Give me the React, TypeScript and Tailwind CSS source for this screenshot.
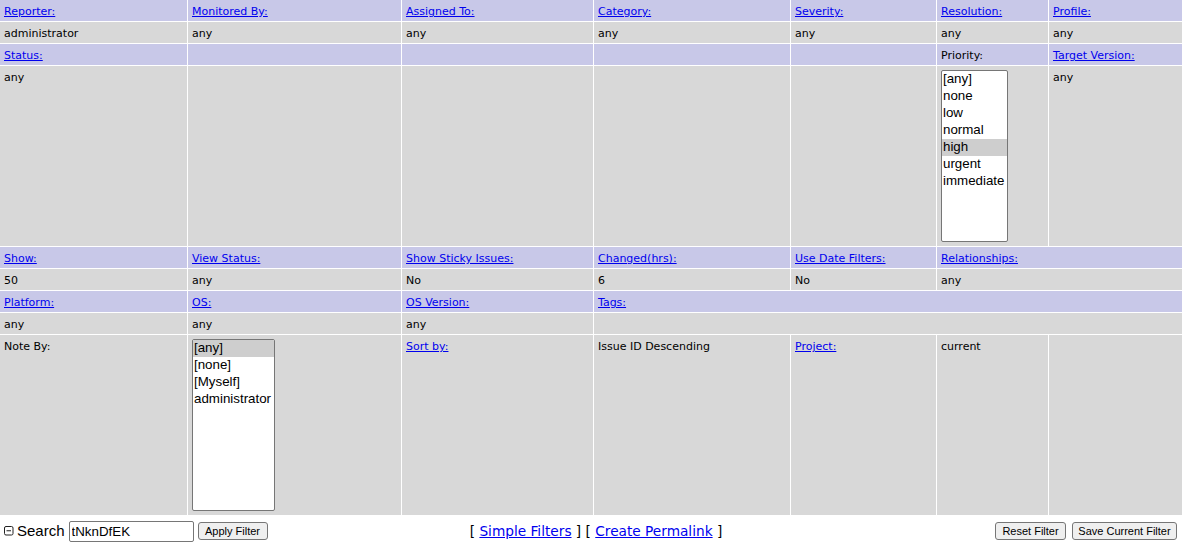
import React from 'react';

const head = "bg-[#c8c8e8] px-1 pt-[5px] leading-[13px] whitespace-nowrap overflow-hidden";
const data = "bg-[#d8d8d8] px-1 pt-[5px] leading-[13px] whitespace-nowrap overflow-hidden";
const boxCell = "bg-[#d8d8d8] px-1 pt-[4px]";

const HeadLink = ({ label }: { label: string }) => (
  <a href="#" className="text-[#0000ee] underline">
    {label}
  </a>
);

interface ListBoxProps {
  items: string[];
  selected: string;
  width: string;
}

const ListBox: React.FC<ListBoxProps> = ({ items, selected, width }) => (
  <div
    className={`${width} h-[172px] bg-white border border-[#767676] rounded-[2px] overflow-hidden font-['Liberation_Sans',Arial,sans-serif] text-[13.33px] leading-[16px] text-black`}
  >
    {items.map((it) => (
      <div key={it} className={it === selected ? "h-[17px] pl-[1px] bg-[#cecece]" : "h-[17px] pl-[1px]"}>
        {it}
      </div>
    ))}
  </div>
);

const MinusBox = () => (
  <svg width="10" height="10" viewBox="0 0 10 10" className="shrink-0">
    <rect x="0.5" y="0.5" width="8.5" height="8.5" rx="1.5" fill="none" stroke="#222" strokeWidth="1" />
    <line x1="2.5" y1="4.75" x2="7" y2="4.75" stroke="#222" strokeWidth="1" />
  </svg>
);

const btn =
  "h-[18px] bg-[#efefef] border border-[#767676] rounded-[3px] text-[11px] leading-[16px] text-black font-['Liberation_Sans',Arial,sans-serif]";

export default function App() {
  return (
    <div className="w-[1182px] h-[545px] bg-white text-black overflow-hidden">
      <div className="grid grid-cols-[187px_213px_191px_196px_145px_111px_133px] grid-rows-[21px_21px_21px_180px_21px_21px_21px_21px_180px] gap-px bg-white font-['DejaVu_Sans',Verdana,sans-serif] text-[11px]">
        {/* row 1 */}
        <div className={head}><HeadLink label="Reporter:" /></div>
        <div className={head}><HeadLink label="Monitored By:" /></div>
        <div className={head}><HeadLink label="Assigned To:" /></div>
        <div className={head}><HeadLink label="Category:" /></div>
        <div className={head}><HeadLink label="Severity:" /></div>
        <div className={head}><HeadLink label="Resolution:" /></div>
        <div className={head}><HeadLink label="Profile:" /></div>
        {/* row 2 */}
        <div className={data}>administrator</div>
        <div className={data}>any</div>
        <div className={data}>any</div>
        <div className={data}>any</div>
        <div className={data}>any</div>
        <div className={data}>any</div>
        <div className={data}>any</div>
        {/* row 3 */}
        <div className={head}><HeadLink label="Status:" /></div>
        <div className={head}></div>
        <div className={head}></div>
        <div className={head}></div>
        <div className={head}></div>
        <div className={head}>Priority:</div>
        <div className={head}><HeadLink label="Target Version:" /></div>
        {/* row 4 */}
        <div className={data}>any</div>
        <div className={data}></div>
        <div className={data}></div>
        <div className={data}></div>
        <div className={data}></div>
        <div className={boxCell}>
          <ListBox
            width="w-[67px]"
            selected="high"
            items={["[any]", "none", "low", "normal", "high", "urgent", "immediate"]}
          />
        </div>
        <div className={data}>any</div>
        {/* row 5 */}
        <div className={head}><HeadLink label="Show:" /></div>
        <div className={head}><HeadLink label="View Status:" /></div>
        <div className={head}><HeadLink label="Show Sticky Issues:" /></div>
        <div className={head}><HeadLink label="Changed(hrs):" /></div>
        <div className={head}><HeadLink label="Use Date Filters:" /></div>
        <div className={`${head} col-span-2`}><HeadLink label="Relationships:" /></div>
        {/* row 6 */}
        <div className={data}>50</div>
        <div className={data}>any</div>
        <div className={data}>No</div>
        <div className={data}>6</div>
        <div className={data}>No</div>
        <div className={`${data} col-span-2`}>any</div>
        {/* row 7 */}
        <div className={head}><HeadLink label="Platform:" /></div>
        <div className={head}><HeadLink label="OS:" /></div>
        <div className={head}><HeadLink label="OS Version:" /></div>
        <div className={`${head} col-span-4`}><HeadLink label="Tags:" /></div>
        {/* row 8 */}
        <div className={data}>any</div>
        <div className={data}>any</div>
        <div className={data}>any</div>
        <div className={`${data} col-span-4`}></div>
        {/* row 9 */}
        <div className={data}>Note By:</div>
        <div className={boxCell}>
          <ListBox
            width="w-[83px]"
            selected="[any]"
            items={["[any]", "[none]", "[Myself]", "administrator"]}
          />
        </div>
        <div className={data}><HeadLink label="Sort by:" /></div>
        <div className={data}>Issue ID Descending</div>
        <div className={data}><HeadLink label="Project:" /></div>
        <div className={data}>current</div>
        <div className={data}></div>
      </div>

      {/* bottom bar */}
      <div className="grid grid-cols-[1fr_auto_1fr] items-center h-[30px] mt-px">
        <div className="flex items-center pl-[4px]">
          <MinusBox />
          <span className="ml-[3px] text-[15px] font-['Liberation_Sans',Arial,sans-serif]">Search</span>
          <input
            readOnly
            value="tNknDfEK"
            className="ml-[4px] w-[125px] h-[21px] px-[2px] bg-white border border-[#767676] rounded-[2px] text-[13.33px] font-['Liberation_Sans',Arial,sans-serif] outline-none"
          />
          <button className={`${btn} ml-[4px] w-[70px]`}>Apply Filter</button>
        </div>
        <div className="ml-[10px] text-[13.7px] font-['DejaVu_Sans',Verdana,sans-serif] whitespace-pre">
          {"[ "}
          <a href="#" className="text-[#0000ee] underline">Simple Filters</a>
          {" ] [ "}
          <a href="#" className="text-[#0000ee] underline">Create Permalink</a>
          {" ]"}
        </div>
        <div className="flex items-center justify-end gap-[6px] pr-[5px]">
          <button className={`${btn} w-[71px]`}>Reset Filter</button>
          <button className={`${btn} w-[105px]`}>Save Current Filter</button>
        </div>
      </div>
    </div>
  );
}
